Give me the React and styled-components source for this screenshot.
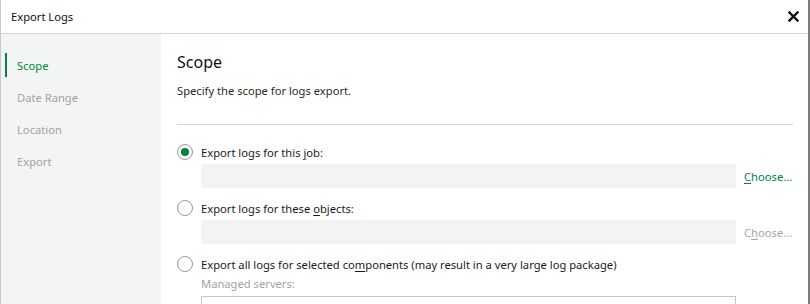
import React from "react";
import styled, { createGlobalStyle } from "styled-components";

const Global = createGlobalStyle`
  html, body { margin: 0; padding: 0; background: #fff; }
  body { font-family: "Segoe UI", "Noto Sans", "Open Sans", sans-serif; font-size: 11.2px; color: #1a1a1a; }
  * { box-sizing: border-box; }
`;

const GREEN = "#00833e";

const Window = styled.div`
  width: 810px;
  height: 304px;
  display: flex;
  flex-direction: column;
  border-left: 1px solid #c8c8c8;
  border-right: 2px solid #7d7d7d;
  overflow: hidden;
  background: #fff;
`;

const TitleBar = styled.div`
  height: 34px;
  flex: none;
  display: flex;
  align-items: center;
  justify-content: space-between;
  padding: 0 9px 0 10px;
  border-bottom: 1px solid #d2d2d2;
`;

const Title = styled.div`
  font-size: 11.2px;
  color: #111;
`;

const CloseButton = styled.div`
  width: 11px;
  height: 14px;
  display: flex;
  align-items: center;
  justify-content: center;
`;

const Body = styled.div`
  flex: 1;
  display: flex;
  min-height: 0;
`;

const Sidebar = styled.nav`
  width: 160px;
  flex: none;
  background: #f3f4f4;
  padding-top: 15px;
  display: flex;
  flex-direction: column;
`;

const NavItem = styled.div`
  position: relative;
  height: 32px;
  display: flex;
  align-items: center;
  padding-left: 16px;
  font-size: 11.2px;
  color: ${(p) => (p.$active ? GREEN : "#a0a3a5")};
  &::before {
    content: "";
    display: ${(p) => (p.$active ? "block" : "none")};
    position: absolute;
    left: 4px;
    top: 4px;
    bottom: 4px;
    width: 2px;
    background: ${GREEN};
  }
`;

const Content = styled.div`
  flex: 1;
  padding: 16px 15px 0 16px;
  display: flex;
  flex-direction: column;
`;

const Heading = styled.h2`
  margin: 0;
  font-size: 16px;
  font-weight: 400;
  line-height: 24px;
  color: #111;
`;

const Subtitle = styled.p`
  margin: 8px 0 0 0;
  font-size: 11.2px;
  line-height: 18px;
  color: #2a2a2a;
`;

const Divider = styled.hr`
  margin: 24px 0 0 0;
  border: none;
  border-top: 1px solid #d4d4d4;
`;

const Options = styled.div`
  margin-top: 19px;
  display: flex;
  flex-direction: column;
`;

const RadioRow = styled.label`
  display: flex;
  align-items: center;
  height: 16px;
  gap: 8px;
  font-size: 11.2px;
  color: #1a1a1a;
`;

const Radio = styled.span`
  width: 16px;
  height: 16px;
  border-radius: 50%;
  border: 1px solid #9a9a9a;
  background: #fff;
  display: flex;
  align-items: center;
  justify-content: center;
  flex: none;
  &::after {
    content: "";
    display: ${(p) => (p.$checked ? "block" : "none")};
    width: 8px;
    height: 8px;
    border-radius: 50%;
    background: ${GREEN};
  }
`;

const FieldRow = styled.div`
  display: flex;
  align-items: center;
  margin: 4px 0 12px 24px;
  gap: 8px;
`;

const Field = styled.div`
  flex: none;
  width: 535px;
  height: ${(p) => (p.$outlined ? "40px" : "24px")};
  background: ${(p) => (p.$outlined ? "#fff" : "#f2f3f3")};
  border: ${(p) => (p.$outlined ? "1px solid #c6c6c6" : "none")};
`;

const ChooseLink = styled.span`
  font-size: 11.2px;
  color: ${(p) => (p.$disabled ? "#a3a6a8" : GREEN)};
  cursor: ${(p) => (p.$disabled ? "default" : "pointer")};
`;

const SubLabel = styled.div`
  margin: 4px 0 0 24px;
  font-size: 11.2px;
  line-height: 16px;
  color: #a0a3a5;
`;

const Under = styled.u`
  text-underline-offset: 2px;
`;

export default function App() {
  return (
    <>
      <Global />
      <Window>
        <TitleBar>
          <Title>Export Logs</Title>
          <CloseButton>
            <svg width="11" height="11" viewBox="0 0 11 11">
              <path d="M1.5 1.5 L9.5 9.5 M9.5 1.5 L1.5 9.5" stroke="#111" strokeWidth="2.4" strokeLinecap="square" />
            </svg>
          </CloseButton>
        </TitleBar>
        <Body>
          <Sidebar>
            <NavItem $active>Scope</NavItem>
            <NavItem>Date Range</NavItem>
            <NavItem>Location</NavItem>
            <NavItem>Export</NavItem>
          </Sidebar>
          <Content>
            <Heading>Scope</Heading>
            <Subtitle>Specify the scope for logs export.</Subtitle>
            <Divider />
            <Options>
              <RadioRow>
                <Radio $checked />
                <span>Export logs for this <Under>j</Under>ob:</span>
              </RadioRow>
              <FieldRow>
                <Field />
                <ChooseLink><Under>C</Under>hoose...</ChooseLink>
              </FieldRow>
              <RadioRow>
                <Radio />
                <span>Export logs for these <Under>o</Under>bjects:</span>
              </RadioRow>
              <FieldRow>
                <Field />
                <ChooseLink $disabled>C<Under>h</Under>oose...</ChooseLink>
              </FieldRow>
              <RadioRow>
                <Radio />
                <span>Export all logs for selected co<Under>m</Under>ponents (may result in a very large log package)</span>
              </RadioRow>
              <SubLabel>Managed servers:</SubLabel>
              <FieldRow>
                <Field $outlined />
              </FieldRow>
            </Options>
          </Content>
        </Body>
      </Window>
    </>
  );
}
